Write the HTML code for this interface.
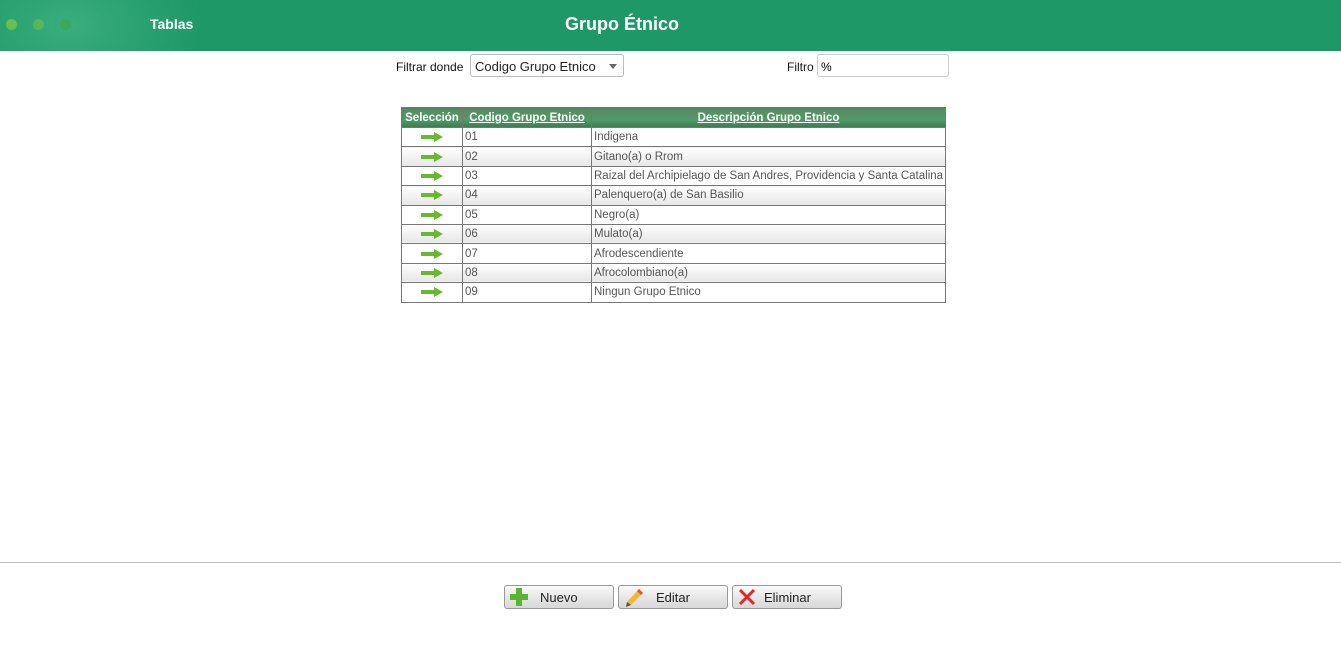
<!DOCTYPE html>
<html><head><meta charset="utf-8"><style>
*{margin:0;padding:0;box-sizing:border-box}
body{width:1341px;height:656px;background:#fff;font-family:"Liberation Sans",sans-serif;position:relative;overflow:hidden}
.top{position:absolute;left:0;top:0;width:1341px;height:51px;background:#1f9868;overflow:hidden}
.glow{position:absolute;left:-60px;top:-60px;width:260px;height:170px;background:radial-gradient(ellipse at center,rgba(80,190,140,.55),rgba(31,152,104,0) 70%)}
.dot{position:absolute;top:19px;width:11px;height:11px;border-radius:50%}
.t1{position:absolute;left:150px;top:16px;color:#fff;font-weight:bold;font-size:14px}
.t2{position:absolute;left:565px;top:14px;color:#fff;font-weight:bold;font-size:18px}
.lbl{position:absolute;font-size:12px;color:#111}
.sel{position:absolute;left:470px;top:54px;width:154px;height:23px;border:1px solid #bbb;border-radius:3px;font-size:13px;color:#222;padding:4px 4px}
.sel:after{content:"";position:absolute;right:6px;top:9px;border:4px solid transparent;border-top:5px solid #666}
.inp{position:absolute;left:817px;top:54px;width:132px;height:23px;border:1px solid #ccc;border-radius:3px;font-size:12px;padding:5px 3px}
table{position:absolute;left:401px;top:107px;width:544px;table-layout:fixed;border-collapse:collapse;font-size:11.5px;color:#555}
th{height:20px;background:linear-gradient(#5a8a62,#4f9a68 60%,#3d7a4f);color:#fff;font-size:11.5px;font-weight:bold;border:1px solid #777;padding:0;white-space:nowrap;overflow:hidden}
td{height:19.4px;border:1px solid #777;padding:0 2px;white-space:nowrap;overflow:hidden}
tr.a td{background:linear-gradient(#fff,#e6e6e6)}
.arr{display:block;margin:0 auto;width:22px;height:10px}
.line{position:absolute;left:0;top:562px;width:1341px;height:1px;background:#bbb}
.btn{position:absolute;top:585px;width:110px;height:24px;border:1px solid #999;border-radius:3px;background:linear-gradient(#fafafa,#e4e4e4 60%,#d8d8d8);font-size:13px;color:#222}
.btn svg{position:absolute;left:5px;top:2px}
.btn span{position:absolute;top:4px}
</style></head><body>
<div class="top"><div class="glow"></div>
<div class="dot" style="left:6px;background:#6cbf4e"></div>
<div class="dot" style="left:33px;background:#5bb559"></div>
<div class="dot" style="left:60px;background:#3aa85d"></div>
<div class="t1">Tablas</div><div class="t2">Grupo Étnico</div></div>
<div class="lbl" style="left:396px;top:60px">Filtrar donde</div>
<div class="sel">Codigo Grupo Etnico</div>
<div class="lbl" style="left:787px;top:60px">Filtro</div>
<div class="inp">%</div>
<table>
<colgroup><col style="width:61px"><col style="width:129px"><col style="width:354px"></colgroup>
<tr><th>Selección</th><th><u>Codigo Grupo Etnico</u></th><th><u>Descripción Grupo Etnico</u></th></tr>
<tr><td><svg class="arr"><path d="M0 3h13V0l9 5-9 5V7H0z" fill="#6ab82e"/></svg></td><td>01</td><td>Indigena</td></tr>
<tr class="a"><td><svg class="arr"><path d="M0 3h13V0l9 5-9 5V7H0z" fill="#6ab82e"/></svg></td><td>02</td><td>Gitano(a) o Rrom</td></tr>
<tr><td><svg class="arr"><path d="M0 3h13V0l9 5-9 5V7H0z" fill="#6ab82e"/></svg></td><td>03</td><td>Raizal del Archipielago de San Andres, Providencia y Santa Catalina</td></tr>
<tr class="a"><td><svg class="arr"><path d="M0 3h13V0l9 5-9 5V7H0z" fill="#6ab82e"/></svg></td><td>04</td><td>Palenquero(a) de San Basilio</td></tr>
<tr><td><svg class="arr"><path d="M0 3h13V0l9 5-9 5V7H0z" fill="#6ab82e"/></svg></td><td>05</td><td>Negro(a)</td></tr>
<tr class="a"><td><svg class="arr"><path d="M0 3h13V0l9 5-9 5V7H0z" fill="#6ab82e"/></svg></td><td>06</td><td>Mulato(a)</td></tr>
<tr><td><svg class="arr"><path d="M0 3h13V0l9 5-9 5V7H0z" fill="#6ab82e"/></svg></td><td>07</td><td>Afrodescendiente</td></tr>
<tr class="a"><td><svg class="arr"><path d="M0 3h13V0l9 5-9 5V7H0z" fill="#6ab82e"/></svg></td><td>08</td><td>Afrocolombiano(a)</td></tr>
<tr><td><svg class="arr"><path d="M0 3h13V0l9 5-9 5V7H0z" fill="#6ab82e"/></svg></td><td>09</td><td>Ningun Grupo Etnico</td></tr>
</table>
<div class="line"></div>
<div class="btn" style="left:504px"><svg width="18" height="18"><path d="M6 0h6v6h6v6h-6v6H6v-6H0V6h6z" fill="#5cb531"/></svg><span style="left:35px">Nuevo</span></div>
<div class="btn" style="left:618px"><svg width="20" height="20"><path d="M15 1l4 4L7 17l-5 2 1-5z" fill="#f0b83a"/><path d="M15 1l4 4-2 2-4-4z" fill="#e05050"/><path d="M2 19l1-5 4 3z" fill="#555"/></svg><span style="left:37px">Editar</span></div>
<div class="btn" style="left:732px"><svg width="18" height="18"><path d="M2 2l14 14M16 2L2 16" stroke="#e02828" stroke-width="3"/></svg><span style="left:31px">Eliminar</span></div>
</body></html>
